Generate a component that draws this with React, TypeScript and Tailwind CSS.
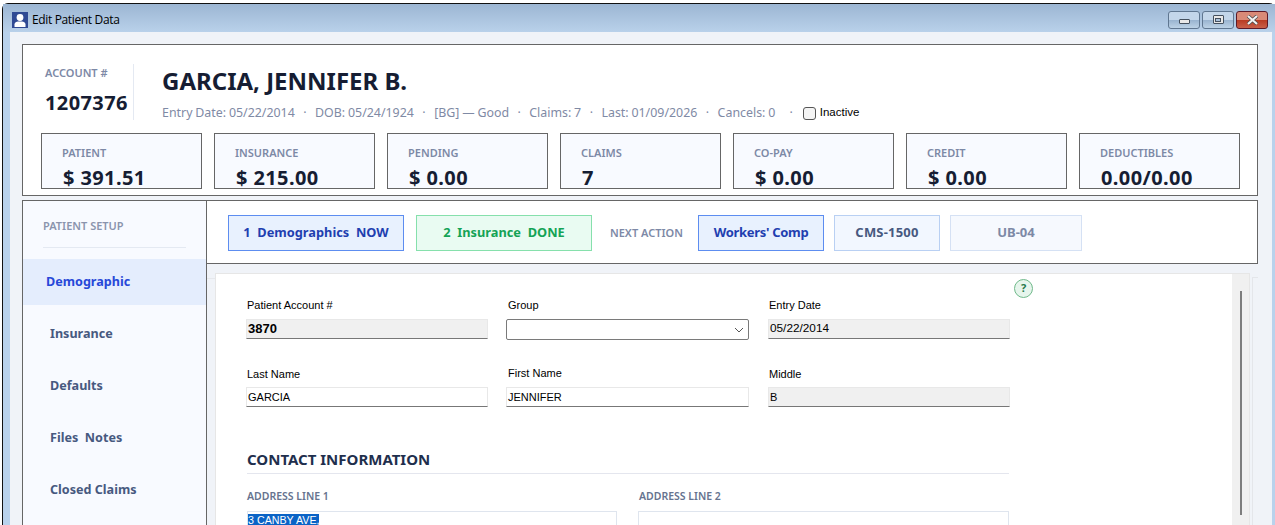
import React from 'react';

const stats = [
  { label: 'PATIENT', value: '$ 391.51' },
  { label: 'INSURANCE', value: '$ 215.00' },
  { label: 'PENDING', value: '$ 0.00' },
  { label: 'CLAIMS', value: '7' },
  { label: 'CO-PAY', value: '$ 0.00' },
  { label: 'CREDIT', value: '$ 0.00' },
  { label: 'DEDUCTIBLES', value: '0.00/0.00' },
];

const navItems = ['Insurance', 'Defaults', 'Files  Notes', 'Closed Claims'];

const WinButton = ({ className, children }: { className: string; children: React.ReactNode }) => (
  <div className={`flex h-[18px] w-[32px] items-center justify-center rounded-[3px] border ${className}`}>
    {children}
  </div>
);

const TextBox = ({ value, gray, className }: { value: string; gray?: boolean; className: string }) => (
  <div
    className={`flex h-[20px] items-center border border-[#e8e8e8] border-b-[#777] pl-[1px] ${gray ? 'bg-[#f0f0f0]' : 'bg-white'} ${className}`}
  >
    {value}
  </div>
);

export default function App() {
  return (
    <div className="h-[525px] w-[1275px] overflow-hidden bg-white font-['Noto_Sans',sans-serif]">
      <div className="ml-[2px] mt-[3px] h-[522px] rounded-tl-[6px] rounded-tr-[6px] border-l border-t border-[#111] bg-[#b9d2ec]">
        {/* title bar */}
        <div className="flex h-[28px] items-center justify-between bg-[linear-gradient(#9cb6d3,#b9d1ea)] pl-[9px] pr-[7px] pt-[3px]">
          <div className="flex items-center gap-[4px]">
            <svg width="16" height="16" viewBox="0 0 16 16">
              <rect width="16" height="16" fill="#2f4a94" />
              <circle cx="8" cy="5.5" r="3.4" fill="#fff" />
              <path d="M2.5 15v-2.5C2.5 10 5 9.5 8 9.5s5.5.5 5.5 3V15z" fill="#fff" />
            </svg>
            <span className="font-['Open_Sans',sans-serif] text-[12px] tracking-[-0.35px] text-black">Edit Patient Data</span>
          </div>
          <div className="flex gap-[2px]">
            <WinButton className="border-[#5f7690] bg-[linear-gradient(#c3d6ea_50%,#98b3cf_50%,#bcd2e6)]">
              <div className="mt-[3px] h-[5px] w-[11px] rounded-[1px] border border-[#44505e] bg-[#e8e8e8]" />
            </WinButton>
            <WinButton className="border-[#5f7690] bg-[linear-gradient(#c3d6ea_50%,#98b3cf_50%,#bcd2e6)]">
              <div className="flex h-[9px] w-[11px] items-center justify-center rounded-[1px] border border-[#44505e] bg-[#e8e8e8]">
                <div className="h-[4px] w-[6px] border border-[#44505e] bg-[#a9c0d9]" />
              </div>
            </WinButton>
            <WinButton className="border-[#5d1a28] bg-[linear-gradient(#d98a77_50%,#b83a22_50%,#c9604a)]">
              <svg width="13" height="10" viewBox="0 0 13 10">
                <path d="M2 1l9 8M11 1l-9 8" stroke="#4a4a4a" strokeWidth="3.6" />
                <path d="M2 1l9 8M11 1l-9 8" stroke="#f2f2f2" strokeWidth="2.2" />
              </svg>
            </WinButton>
          </div>
        </div>

        {/* client area */}
        <div className="ml-[7px] mr-[3px] h-[493px] bg-[#f0f3f8] px-[12px] pt-[12px]">
          {/* header panel */}
          <div className="h-[152px] w-[1236px] border border-[#666] bg-white pl-[18px] pt-[19px]">
            <div className="flex h-[56px]">
              <div className="ml-[4px] w-[89px] border-r border-[#e4e9f2] pt-[1px]">
                <div className="text-[11px] font-semibold leading-[16px] text-[#7d89a6]">ACCOUNT #</div>
                <div className="mt-[9px] text-[20px] font-bold leading-[26px] tracking-[0.4px] text-[#161d33]">1207376</div>
              </div>
              <div className="ml-[28px]">
                <div className="mt-[1px] text-[24px] font-bold leading-[32px] text-[#161d33]">GARCIA, JENNIFER B.</div>
                <div className="mt-[7px] flex h-[18px] items-center whitespace-pre text-[12.4px] text-[#7f8aa5] [word-spacing:-0.4px]">
                  <span>Entry Date: 05/22/2014   ·   DOB: 05/24/1924   ·   [BG] — Good   ·   Claims: 7   ·   Last: 01/09/2026   ·   Cancels: 0     ·</span>
                  <span className="ml-[10px] h-[13px] w-[13px] rounded-[3px] border border-[#555] bg-[#f4f4f4]" />
                  <span className="ml-[4px] font-['Liberation_Sans',sans-serif] text-[11.5px] text-black">Inactive</span>
                </div>
              </div>
            </div>
            <div className="mt-[13px] flex gap-[12px]">
              {stats.map((s) => (
                <div key={s.label} className="h-[56px] w-[161px] border border-[#666] bg-[#f8faff] pl-[20px] pt-[11px]">
                  <div className="text-[11px] font-semibold leading-[16px] text-[#7d89a6]">{s.label}</div>
                  <div className="ml-[1px] mt-[7px] text-[20px] font-bold leading-[20px] tracking-[0.4px] text-[#161d33]">{s.value}</div>
                </div>
              ))}
            </div>
          </div>

          {/* body */}
          <div className="mt-[4px] flex h-[330px] w-[1236px]">
            <div className="h-full w-[185px] shrink-0 border-x border-t border-[#666] bg-[#f8faff]">
              <div className="mx-[20px] h-[47px] border-b border-[#e4e9f2] pt-[17px] text-[11px] font-semibold leading-[16px] text-[#8a94ad]">
                PATIENT SETUP
              </div>
              <div className="mt-[11px] flex h-[46px] items-center bg-[#e4edfd] pl-[23px] text-[12.6px] font-bold text-[#2748d8]">
                Demographic
              </div>
              {navItems.map((item) => (
                <div key={item} className="mt-[6px] flex h-[46px] items-center whitespace-pre pl-[27px] text-[12.6px] font-bold text-[#47597f]">
                  {item}
                </div>
              ))}
            </div>

            <div className="min-w-0 flex-1">
              <div className="flex h-[64px] items-center border-y border-r border-[#666] bg-white pl-[21px] pt-[2px]">
                <div className="flex h-[36px] w-[176px] items-center justify-center whitespace-pre border border-[#5d8df0] bg-[#e8f1fe] text-[12.8px] font-bold text-[#1f3fb0]">
                  1  Demographics  NOW
                </div>
                <div className="ml-[12px] flex h-[36px] w-[176px] items-center justify-center whitespace-pre border border-[#86e0ac] bg-[#e9fbf2] text-[12.8px] font-bold text-[#14a356]">
                  2  Insurance  DONE
                </div>
                <div className="ml-[18px] w-[73px] whitespace-nowrap text-[11px] font-semibold text-[#7d89a6]">NEXT ACTION</div>
                <div className="ml-[15px] flex h-[36px] w-[126px] items-center justify-center border border-[#5d8df0] bg-[#e8f1fe] text-[13px] font-bold tracking-[-0.3px] text-[#1f3fb0]">
                  Workers' Comp
                </div>
                <div className="ml-[10px] flex h-[36px] w-[106px] items-center justify-center border border-[#b9d0f3] bg-[#f2f7ff] text-[13px] font-bold tracking-[0.2px] text-[#47597f]">
                  CMS-1500
                </div>
                <div className="ml-[10px] flex h-[36px] w-[132px] items-center justify-center border border-[#d5e1f4] bg-[#f6f9fe] text-[13px] font-bold text-[#7d89a6]">
                  UB-04
                </div>
              </div>

              <div className="mt-[9px] flex">
                <div className="mt-[5px] h-[6px] w-[8px] border-t border-[#e6e8ec]" />
                {/* form panel */}
                <div className="flex h-[260px] w-[1035px] border border-[#e6e6e6] bg-white">
                  <div className="relative w-[1016px] pl-[30px] font-['Liberation_Sans',sans-serif] text-[11px] text-black">
                    <div className="absolute left-[798px] top-[5px] flex h-[19px] w-[19px] items-center justify-center rounded-full border border-[#6fb98a] bg-[#e6f5ec] font-['Noto_Sans',sans-serif] text-[11px] font-bold text-[#24794a]">
                      ?
                    </div>

                    <div className="flex pt-[23px]">
                      <div className="w-[260px]">
                        <div className="h-[22px] pl-[1px] leading-[16px]">Patient Account #</div>
                        <TextBox value="3870" gray className="w-[242px] text-[13px] font-bold" />
                      </div>
                      <div className="w-[262px]">
                        <div className="h-[22px] pl-[2px] leading-[16px]">Group</div>
                        <div className="flex h-[21px] w-[243px] items-center justify-end rounded-[2px] border border-[#7a7a7a] bg-white pr-[3px]">
                          <svg width="12" height="12" viewBox="0 0 12 12">
                            <path d="M2 4l4 4 4-4" fill="none" stroke="#555" strokeWidth="1" />
                          </svg>
                        </div>
                      </div>
                      <div>
                        <div className="h-[22px] pl-[1px] leading-[16px]">Entry Date</div>
                        <TextBox value="05/22/2014" gray className="w-[242px] text-[11.8px]" />
                      </div>
                    </div>

                    <div className="mt-[26px] flex">
                      <div className="w-[260px]">
                        <div className="h-[21px] pl-[1px] leading-[16px]">Last Name</div>
                        <TextBox value="GARCIA" className="w-[242px]" />
                      </div>
                      <div className="w-[262px]">
                        <div className="-mt-[1px] h-[22px] pl-[2px] leading-[16px]">First Name</div>
                        <TextBox value="JENNIFER" className="w-[243px]" />
                      </div>
                      <div>
                        <div className="h-[21px] pl-[1px] leading-[16px]">Middle</div>
                        <TextBox value="B" gray className="w-[242px]" />
                      </div>
                    </div>

                    <div className="ml-[1px] mt-[40px] h-[27px] w-[762px] border-b border-[#e4e6ee] font-['Noto_Sans',sans-serif] text-[15px] font-bold leading-[24px] text-[#1f2f4d]">
                      CONTACT INFORMATION
                    </div>
                    <div className="ml-[1px] mt-[14px] flex gap-[21px] font-['Noto_Sans',sans-serif]">
                      <div className="w-[370px]">
                        <div className="text-[10.5px] font-semibold leading-[16px] text-[#66738f]">ADDRESS LINE 1</div>
                        <div className="mt-[7px] h-[30px] border border-[#dfe5ee] pt-[2px] font-['Liberation_Sans',sans-serif] text-[10.7px] leading-[13px]">
                          <span className="bg-[#0a63c6] text-white">3 CANBY AVE,</span>
                        </div>
                      </div>
                      <div className="w-[371px]">
                        <div className="pl-[1px] text-[10.5px] font-semibold leading-[16px] text-[#66738f]">ADDRESS LINE 2</div>
                        <div className="mt-[7px] h-[30px] border border-[#dfe5ee]" />
                      </div>
                    </div>
                  </div>
                  {/* scrollbar */}
                  <div className="flex w-[17px] justify-center bg-[#f0f0f0] pt-[17px]">
                    <div className="h-[224px] w-[2px] bg-[#7d7d7d]" />
                  </div>
                </div>
                <div className="ml-[2px] mt-[4px] h-[260px] w-[6px] border-l border-t border-[#e4e6ea]" />
              </div>
            </div>
          </div>
        </div>
      </div>
    </div>
  );
}
